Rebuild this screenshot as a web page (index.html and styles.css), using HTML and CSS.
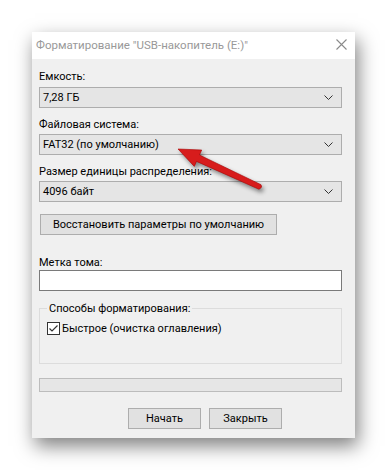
FILE: index.html
```html
<!DOCTYPE html>
<html lang="ru">
<head>
    <meta charset="UTF-8">
    <title>Форматирование</title>
    <link rel="stylesheet" href="styles.css">
</head>
<body>
    <div class="scene">
        <div class="window">
            <div class="titlebar">
                <span class="title">Форматирование "USB-накопитель (E:)"</span>
                <svg class="close" width="11" height="11" viewBox="0 0 11 11">
                    <path d="M0.5 0.5 L10.5 10.5 M10.5 0.5 L0.5 10.5" stroke="#8a8a8a" stroke-width="1.1" fill="none"/>
                </svg>
            </div>

            <div class="content">
                <div class="field-label first">Емкость:</div>
                <div class="select">
                    <span>7,28 ГБ</span>
                    <svg class="chevron" width="9" height="5" viewBox="0 0 9 5"><path d="M0.5 0.5 L4.5 4.5 L8.5 0.5" stroke="#333" fill="none"/></svg>
                </div>

                <div class="field-label">Файловая система:</div>
                <div class="select">
                    <span>FAT32 (по умолчанию)</span>
                    <svg class="chevron" width="9" height="5" viewBox="0 0 9 5"><path d="M0.5 0.5 L4.5 4.5 L8.5 0.5" stroke="#333" fill="none"/></svg>
                </div>

                <div class="field-label">Размер единицы распределения:</div>
                <div class="select">
                    <span>4096 байт</span>
                    <svg class="chevron" width="9" height="5" viewBox="0 0 9 5"><path d="M0.5 0.5 L4.5 4.5 L8.5 0.5" stroke="#333" fill="none"/></svg>
                </div>

                <button type="button" class="btn btn-restore">Восстановить параметры по умолчанию</button>

                <div class="field-label label-volume">Метка тома:</div>
                <div class="textbox"></div>

                <fieldset class="group">
                    <legend>Способы форматирования:</legend>
                    <div class="check-row">
                        <svg class="checkbox" width="13" height="13" viewBox="0 0 13 13">
                            <rect x="0.5" y="0.5" width="12" height="12" fill="#fff" stroke="#333"/>
                            <path d="M2.5 6.5 L5 9 L10.5 3.5" stroke="#333" stroke-width="1.2" fill="none"/>
                        </svg>
                        <span>Быстрое (очистка оглавления)</span>
                    </div>
                </fieldset>

                <div class="progress"></div>

                <div class="actions">
                    <button type="button" class="btn">Начать</button>
                    <button type="button" class="btn">Закрыть</button>
                </div>
            </div>
        </div>

        <!-- стрелка-указатель поверх окна -->
        <svg class="arrow" width="387" height="470" viewBox="0 0 387 470">
            <path d="M178 149 L201.7 150 L199.5 155 L261 184.7 Q263 187.5 259 189.3 L196.5 161.4 L194.3 166.4 Z" fill="#d71c1c" stroke="#a80000" stroke-width="0.6" stroke-linejoin="round"/>
        </svg>
    </div>
</body>
</html>
```

FILE: styles.css
```css
/* общий фон */
body {
    margin: 0;
    background-color: #fff;
    font-family: "Segoe UI", Roboto, "Noto Sans", sans-serif;
    font-size: 11px;
    color: #000;
}

.scene {
    position: relative;
    width: 387px;
    height: 470px;
    padding: 32px 0 0 32px;
    box-sizing: border-box;
}

/* окно */
.window {
    width: 323px;
    height: 406px;
    background-color: #f0f0f0;
    box-shadow: 3px 8px 18px rgba(0, 0, 0, 0.5);
    display: flex;
    flex-direction: column;
}

.titlebar {
    height: 27px;
    background-color: #fff;
    display: flex;
    align-items: center;
    justify-content: space-between;
    padding: 0 8px 2px 4px;
    box-sizing: border-box;
}

.title {
    color: #999;
    font-size: 11.5px;
}

.content {
    padding: 10px 13px 0 7px;
    display: flex;
    flex-direction: column;
}

.field-label {
    line-height: 15px;
    margin-top: 9px;
}

.field-label.first {
    margin-top: 0;
}

.label-volume {
    margin-top: 20px;
}

/* выпадающие списки */
.select {
    height: 21px;
    box-sizing: border-box;
    margin-top: 2px;
    background-color: #e5e5e5;
    border: 1px solid #adadad;
    display: flex;
    align-items: center;
    justify-content: space-between;
    padding: 0 8px 0 3px;
}

.field-label.first + .select {
    margin-top: 3px;
}

/* кнопки */
.btn {
    font-family: inherit;
    font-size: 11px;
    color: #000;
    background-color: #e1e1e1;
    border: 1px solid #adadad;
    height: 21px;
    padding: 0;
    margin: 0;
}

.btn-restore {
    width: 237px;
    margin: 12px 0 0 1px;
}

.textbox {
    height: 21px;
    box-sizing: border-box;
    background-color: #fff;
    border: 1px solid #7a7a7a;
}

/* группа параметров */
.group {
    margin: 10px 0 0 0;
    padding: 6px 6px 0 6px;
    border: 1px solid #dcdcdc;
    height: 63px;
    box-sizing: border-box;
}

.group legend {
    margin-left: 1px;
    padding: 0 2px;
    line-height: 15px;
}

.check-row {
    display: flex;
    align-items: center;
    gap: 2px;
    margin-left: 1px;
}

.checkbox {
    flex-shrink: 0;
}

.progress {
    height: 14px;
    box-sizing: border-box;
    margin-top: 14px;
    background-color: #e6e6e6;
    border: 1px solid #bcbcbc;
}

.actions {
    display: flex;
    gap: 8px;
    margin-top: 16px;
    padding-left: 89px;
}

.actions .btn {
    width: 73px;
}

.arrow {
    position: absolute;
    left: 0;
    top: 0;
    pointer-events: none;
    filter: drop-shadow(2px 3px 2px rgba(0, 0, 0, 0.45));
}
```
